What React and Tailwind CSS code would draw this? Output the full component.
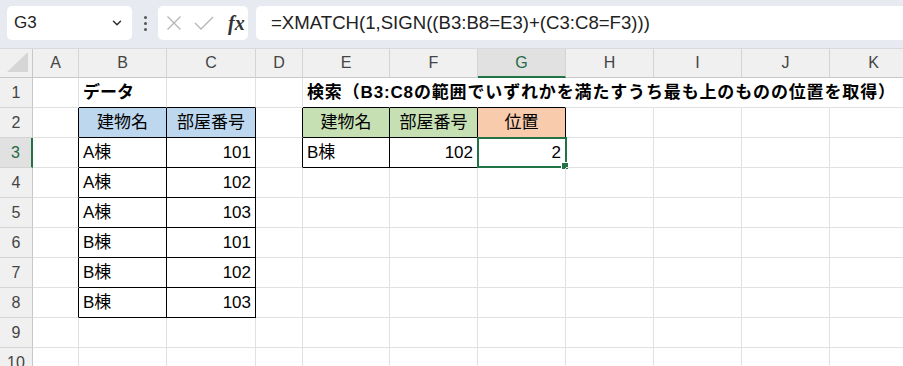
import React from 'react';
import { ChevronDown } from 'lucide-react';

const FONT = { fontFamily: '"Liberation Sans", "Noto Sans CJK JP", sans-serif' };

const cols = [
  { k: '', w: 33 },
  { k: 'A', w: 46 },
  { k: 'B', w: 88 },
  { k: 'C', w: 89 },
  { k: 'D', w: 47 },
  { k: 'E', w: 87 },
  { k: 'F', w: 88 },
  { k: 'G', w: 88 },
  { k: 'H', w: 88 },
  { k: 'I', w: 88 },
  { k: 'J', w: 88 },
  { k: 'K', w: 88 },
];

const BLUE = 'bg-[#bdd7ee]';
const GREEN = 'bg-[#c6e0b4]';
const ORANGE = 'bg-[#f8cbad]';

// cell contents keyed by "B3"
const cells = {
  B1: { t: 'データ', bold: true },
  E1: { t: '検索（B3:C8の範囲でいずれかを満たすうち最も上のものの位置を取得）', bold: true, wide: true },
  B2: { t: '建物名', align: 'center', bg: BLUE },
  C2: { t: '部屋番号', align: 'center', bg: BLUE },
  B3: { t: 'A棟' }, C3: { t: '101', align: 'right' },
  B4: { t: 'A棟' }, C4: { t: '102', align: 'right' },
  B5: { t: 'A棟' }, C5: { t: '103', align: 'right' },
  B6: { t: 'B棟' }, C6: { t: '101', align: 'right' },
  B7: { t: 'B棟' }, C7: { t: '102', align: 'right' },
  B8: { t: 'B棟' }, C8: { t: '103', align: 'right' },
  E2: { t: '建物名', align: 'center', bg: GREEN },
  F2: { t: '部屋番号', align: 'center', bg: GREEN },
  G2: { t: '位置', align: 'center', bg: ORANGE },
  E3: { t: 'B棟' },
  F3: { t: '102', align: 'right' },
  G3: { t: '2', align: 'right' },
};

// bordered ranges: [colStart, colEnd, rowStart, rowEnd]
const ranges = [
  [2, 3, 2, 8],
  [5, 7, 2, 3],
];
const inRange = (c, r) => ranges.some(([c0, c1, r0, r1]) => c >= c0 && c <= c1 && r >= r0 && r <= r1);

// cells whose right gridline is hidden by overflowing text
const hiddenRight = ['E1', 'F1', 'G1', 'H1', 'I1', 'J1'];

function Cell({ c, r }) {
  const key = cols[c].k + r;
  const d = cells[key];
  const blackRight = inRange(c, r) || inRange(c + 1, r);
  const blackBottom = inRange(c, r) || inRange(c, r + 1);
  const rightCls = blackRight
    ? 'border-r border-r-black'
    : hiddenRight.includes(key)
    ? 'border-r border-r-transparent'
    : 'border-r border-r-[#e1e1e1]';
  const bottomCls = blackBottom ? 'border-b border-b-black' : 'border-b border-b-[#e1e1e1]';
  const align =
    d?.align === 'right' ? 'justify-end' : d?.align === 'center' ? 'justify-center' : 'justify-start';

  return (
    <div
      className={`relative flex h-[30px] shrink-0 items-center px-[4px] ${rightCls} ${bottomCls} ${d?.bg || ''} ${align}`}
      style={{ width: cols[c].w }}
    >
      {d && (
        <span
          className={`whitespace-nowrap text-[17px] text-black ${d.bold ? 'font-bold' : ''} ${
            d.wide ? 'tracking-[0.85px]' : ''
          }`}
        >
          {d.t}
        </span>
      )}
      {key === 'G3' && (
        <div className="absolute -left-px -top-px h-[31px] w-[90px] border-2 border-[#217346]">
          <div className="absolute -bottom-[4px] -right-[4px] h-[6px] w-[6px] border border-white bg-[#217346] box-content" />
        </div>
      )}
    </div>
  );
}

function Toolbar() {
  return (
    <div className="flex h-[49px] items-start border-b border-[#d6d9de] bg-[#e7eaf0] pt-[6px]">
      <div className="ml-[7px] flex h-[34px] w-[125px] items-center justify-between rounded-[5px] bg-white pl-[7px] pr-[8px]">
        <span className="text-[17px] text-[#222]">G3</span>
        <ChevronDown size={14} strokeWidth={2.6} className="text-[#333]" />
      </div>
      <div className="flex h-[34px] w-[26px] flex-col items-center justify-center gap-[3px]">
        <span className="h-[3px] w-[3px] rounded-full bg-[#555]" />
        <span className="h-[3px] w-[3px] rounded-full bg-[#555]" />
        <span className="h-[3px] w-[3px] rounded-full bg-[#555]" />
      </div>
      <div className="flex h-[34px] w-[90px] items-center rounded-[5px] bg-white pl-[8px]">
        <svg width="16" height="16" viewBox="0 0 16 16" className="mr-[12px]">
          <path d="M1.5 1.5 L14.5 14.5 M14.5 1.5 L1.5 14.5" stroke="#b5b5b5" strokeWidth="1.3" fill="none" />
        </svg>
        <svg width="20" height="14" viewBox="0 0 20 14" className="mr-[14px]">
          <path d="M1 7 L7 13 L19 1" stroke="#b5b5b5" strokeWidth="1.3" fill="none" />
        </svg>
        <span
          className="text-[20px] italic font-bold leading-none text-[#333]"
          style={{ fontFamily: '"Liberation Serif", serif' }}
        >
          fx
        </span>
      </div>
      <div className="ml-[8px] flex h-[34px] flex-1 items-center rounded-l-[5px] bg-white pl-[15px]">
        <span className="whitespace-nowrap text-[18.6px] text-[#222]">=XMATCH(1,SIGN((B3:B8=E3)+(C3:C8=F3)))</span>
      </div>
    </div>
  );
}

function HeaderRow() {
  return (
    <div className="flex">
      {cols.map((col, i) =>
        i === 0 ? (
          <div
            key="corner"
            className="relative h-[29px] shrink-0 border-r border-b border-[#c8c8c8] bg-[#f0f0f0]"
            style={{ width: col.w }}
          >
            <svg width="24" height="22" viewBox="0 0 24 22" className="absolute bottom-[3px] right-[2px]">
              <polygon points="22,0 22,20 1,20" fill="#d6d6d6" />
            </svg>
          </div>
        ) : (
          <div
            key={col.k}
            className={`flex h-[29px] shrink-0 items-center justify-center border-r border-[#d4d4d4] text-[16px] ${
              col.k === 'G'
                ? 'border-b-2 border-b-[#217346] bg-[#e1e1e1] text-[#1e6b45]'
                : 'border-b border-b-[#c8c8c8] bg-[#f0f0f0] text-[#444]'
            }`}
            style={{ width: col.w }}
          >
            {col.k}
          </div>
        )
      )}
    </div>
  );
}

export default function App() {
  const rows = [1, 2, 3, 4, 5, 6, 7, 8, 9, 10];
  return (
    <div className="h-[366px] w-[903px] overflow-hidden bg-white" style={FONT}>
      <Toolbar />
      <HeaderRow />
      {rows.map((r) => (
        <div key={r} className="flex">
          <div
            className={`flex h-[30px] w-[33px] shrink-0 items-center justify-center border-b border-b-[#d4d4d4] text-[16px] ${
              r === 3
                ? 'border-r-2 border-r-[#217346] bg-[#e1e1e1] text-[#1e6b45]'
                : 'border-r border-r-[#c8c8c8] bg-[#f0f0f0] text-[#444]'
            }`}
          >
            {r}
          </div>
          {cols.slice(1).map((col, i) => (
            <Cell key={col.k} c={i + 1} r={r} />
          ))}
        </div>
      ))}
    </div>
  );
}
